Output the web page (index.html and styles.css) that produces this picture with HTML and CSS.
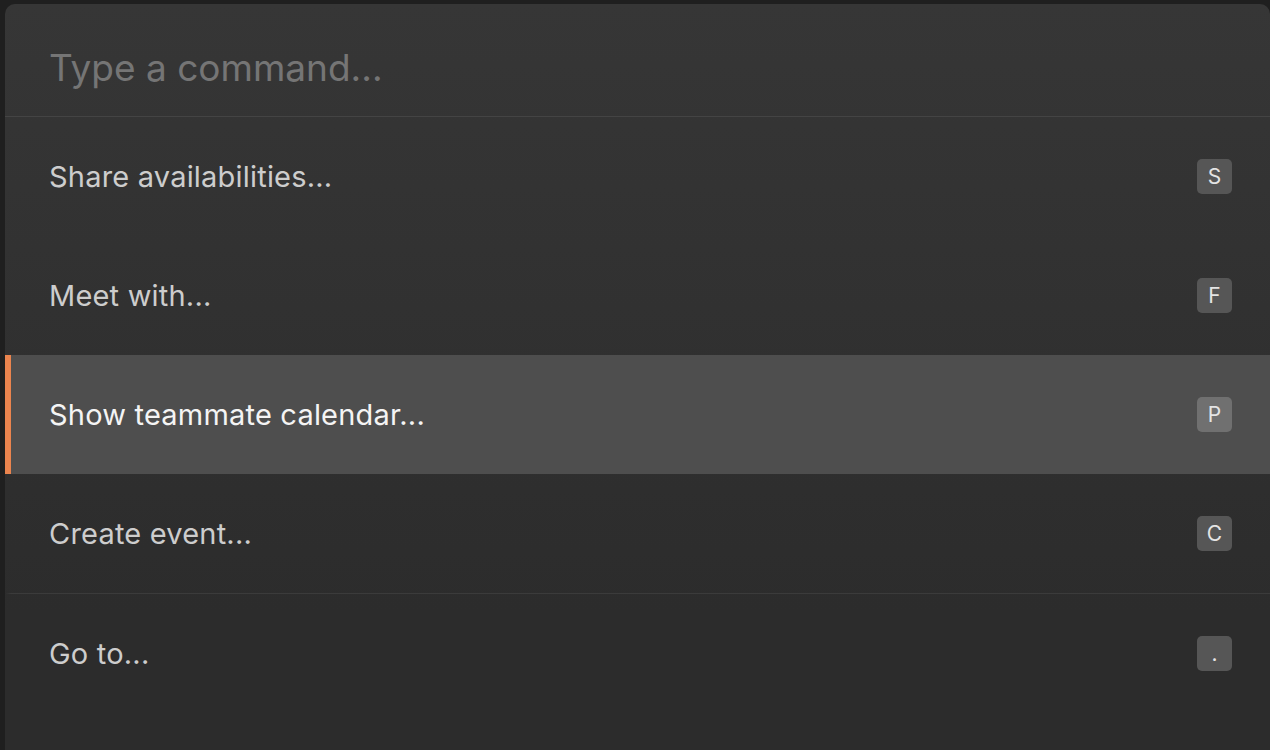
FILE: index.html
```html
<!DOCTYPE html>
<html lang="en">
<head>
  <meta charset="UTF-8">
  <title>Command Menu</title>
  <link rel="stylesheet" href="styles.css">
</head>
<body>
  <div class="palette">
    <div class="search">
      <input type="text" class="search-input" placeholder="Type a command...">
    </div>
    <ul class="commands">
      <li class="command">
        <span class="command-label">Share availabilities...</span>
        <kbd class="key">S</kbd>
      </li>
      <li class="command">
        <span class="command-label">Meet with...</span>
        <kbd class="key">F</kbd>
      </li>
      <li class="command active">
        <span class="command-label">Show teammate calendar...</span>
        <kbd class="key">P</kbd>
      </li>
      <li class="command">
        <span class="command-label">Create event...</span>
        <kbd class="key">C</kbd>
      </li>
      <li class="command group-start">
        <span class="command-label">Go to...</span>
        <kbd class="key">.</kbd>
      </li>
    </ul>
  </div>
</body>
</html>
```

FILE: styles.css
```css
html, body {
  height: 100%;
}

body {
  margin: 0;
  padding: 4px 0 0 5px;
  box-sizing: border-box;
  background: #1f1f1f;
  font-family: Inter, "Helvetica Neue", Arial, sans-serif;
  overflow: hidden;
}

.palette {
  height: 760px;
  border-radius: 10px 10px 0 0;
  background: linear-gradient(to bottom, #363636, #2c2c2c 80%);
  display: flex;
  flex-direction: column;
}

.search {
  height: 112px;
  display: flex;
  align-items: center;
  padding: 0 44px;
  border-bottom: 1px solid #444444;
}

.search-input {
  flex: 1;
  background: none;
  border: none;
  outline: none;
  padding: 14px 0 0 0;
  font-family: inherit;
  font-size: 37px;
  color: #e0e0e0;
}

.search-input::placeholder {
  color: #757575;
}

.commands {
  list-style: none;
  margin: 0;
  padding: 0;
}

.command {
  height: 119px;
  box-sizing: border-box;
  display: flex;
  align-items: center;
  justify-content: space-between;
  padding: 0 38px 0 38px;
  border-left: 6px solid transparent;
}

.command-label {
  font-size: 29px;
  color: #cdcdcd;
  letter-spacing: 0.2px;
}

.command.active {
  background: #4e4e4e;
  border-left-color: #ea844e;
}

.command.active .command-label {
  color: #f4f4f4;
}

.command.group-start {
  border-top: 1px solid #3b3b3b;
}

.key {
  width: 35px;
  height: 35px;
  border-radius: 5px;
  background: #565656;
  color: #e4e4e4;
  font-family: inherit;
  font-size: 21px;
  display: flex;
  align-items: center;
  justify-content: center;
}

.command.active .key {
  background: #707070;
}
```
